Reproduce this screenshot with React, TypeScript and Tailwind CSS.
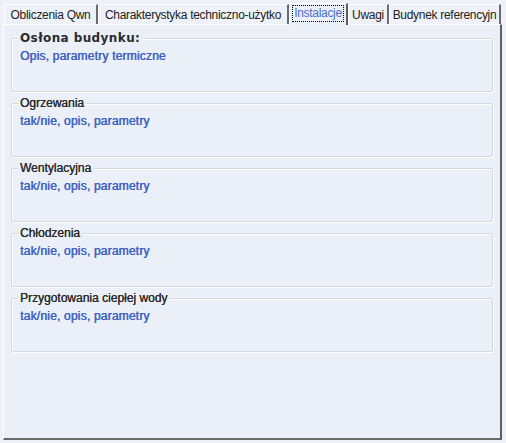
import React from 'react';

const tabs = [
  { label: 'Obliczenia Qwn', w: 'w-[94px]' },
  { label: 'Charakterystyka techniczno-użytko', w: 'w-[191px]' },
  { label: 'Instalacje', w: 'w-[59px]', active: true },
  { label: 'Uwagi', w: 'w-[41px]' },
  { label: 'Budynek referencyjn', w: 'w-[112px]' },
];

const groups = [
  { title: 'Osłona budynku:', text: 'Opis, parametry termiczne', bold: true },
  { title: 'Ogrzewania', text: 'tak/nie, opis, parametry' },
  { title: 'Wentylacyjna', text: 'tak/nie, opis, parametry' },
  { title: 'Chłodzenia', text: 'tak/nie, opis, parametry' },
  { title: 'Przygotowania ciepłej wody', text: 'tak/nie, opis, parametry' },
];

function GroupBox({ title, text, bold }: { title: string; text: string; bold?: boolean }) {
  return (
    <div className="relative h-[54px] border border-[#d3d9e3] shadow-[inset_1px_1px_0_#ffffff,1px_1px_0_#ffffff] rounded-[2px]">
      <span
        className={`absolute left-[6px] top-[-9px] bg-[#ebf0f8] px-[2px] leading-[16px] text-[#2b2b2b] whitespace-nowrap ${
          bold
            ? "font-bold text-[12px] font-['DejaVu_Sans',sans-serif] tracking-[0.4px]"
            : 'text-[12px] [text-shadow:0.2px_0_0_#2b2b2b]'
        }`}
      >
        {title}
      </span>
      <div className="pt-[9px] pl-[8px] text-[12px] leading-[16px] text-[#3e62c4] tracking-[0.2px] [text-shadow:0.5px_0_0_#3e62c4]">
        {text}
      </div>
    </div>
  );
}

export default function App() {
  return (
    <div
      className="w-[506px] h-[443px] bg-[#eef2f8] pt-[3px] pl-[3px] flex flex-col"
      style={{ fontFamily: '"Liberation Sans", Arial, sans-serif' }}
    >
      <div className="flex h-[21px] items-end pl-[1px] relative z-10">
        {tabs.map((t) =>
          t.active ? (
            <div
              key={t.label}
              className={`${t.w} h-[22px] -mb-[1px] bg-[#ebf0f8] border-l border-t border-white border-r-2 border-r-[#5a5a5a] flex items-start justify-center pt-[1px]`}
            >
              <span className="border border-dotted border-black px-[1px] text-[12px] leading-[15px] tracking-[-0.3px] text-[#4a6fd0] whitespace-nowrap">
                {t.label}
              </span>
            </div>
          ) : (
            <div
              key={t.label}
              className={`${t.w} h-[20px] bg-[#eef2f8] border-l border-t border-white border-r-2 border-r-[#6b6b6b] flex items-center justify-center text-[12px] tracking-[-0.3px] text-[#222] whitespace-nowrap overflow-hidden`}
            >
              {t.label}
            </div>
          )
        )}
      </div>
      <div className="w-[499px] h-[416px] bg-[#ebf0f8] border-l border-t border-white border-r-2 border-r-[#5d5d5d] border-b-2 border-b-[#6a6a6a] px-[7px] pt-[13px] flex flex-col gap-[11px]">
        {groups.map((g) => (
          <GroupBox key={g.title} {...g} />
        ))}
      </div>
    </div>
  );
}
